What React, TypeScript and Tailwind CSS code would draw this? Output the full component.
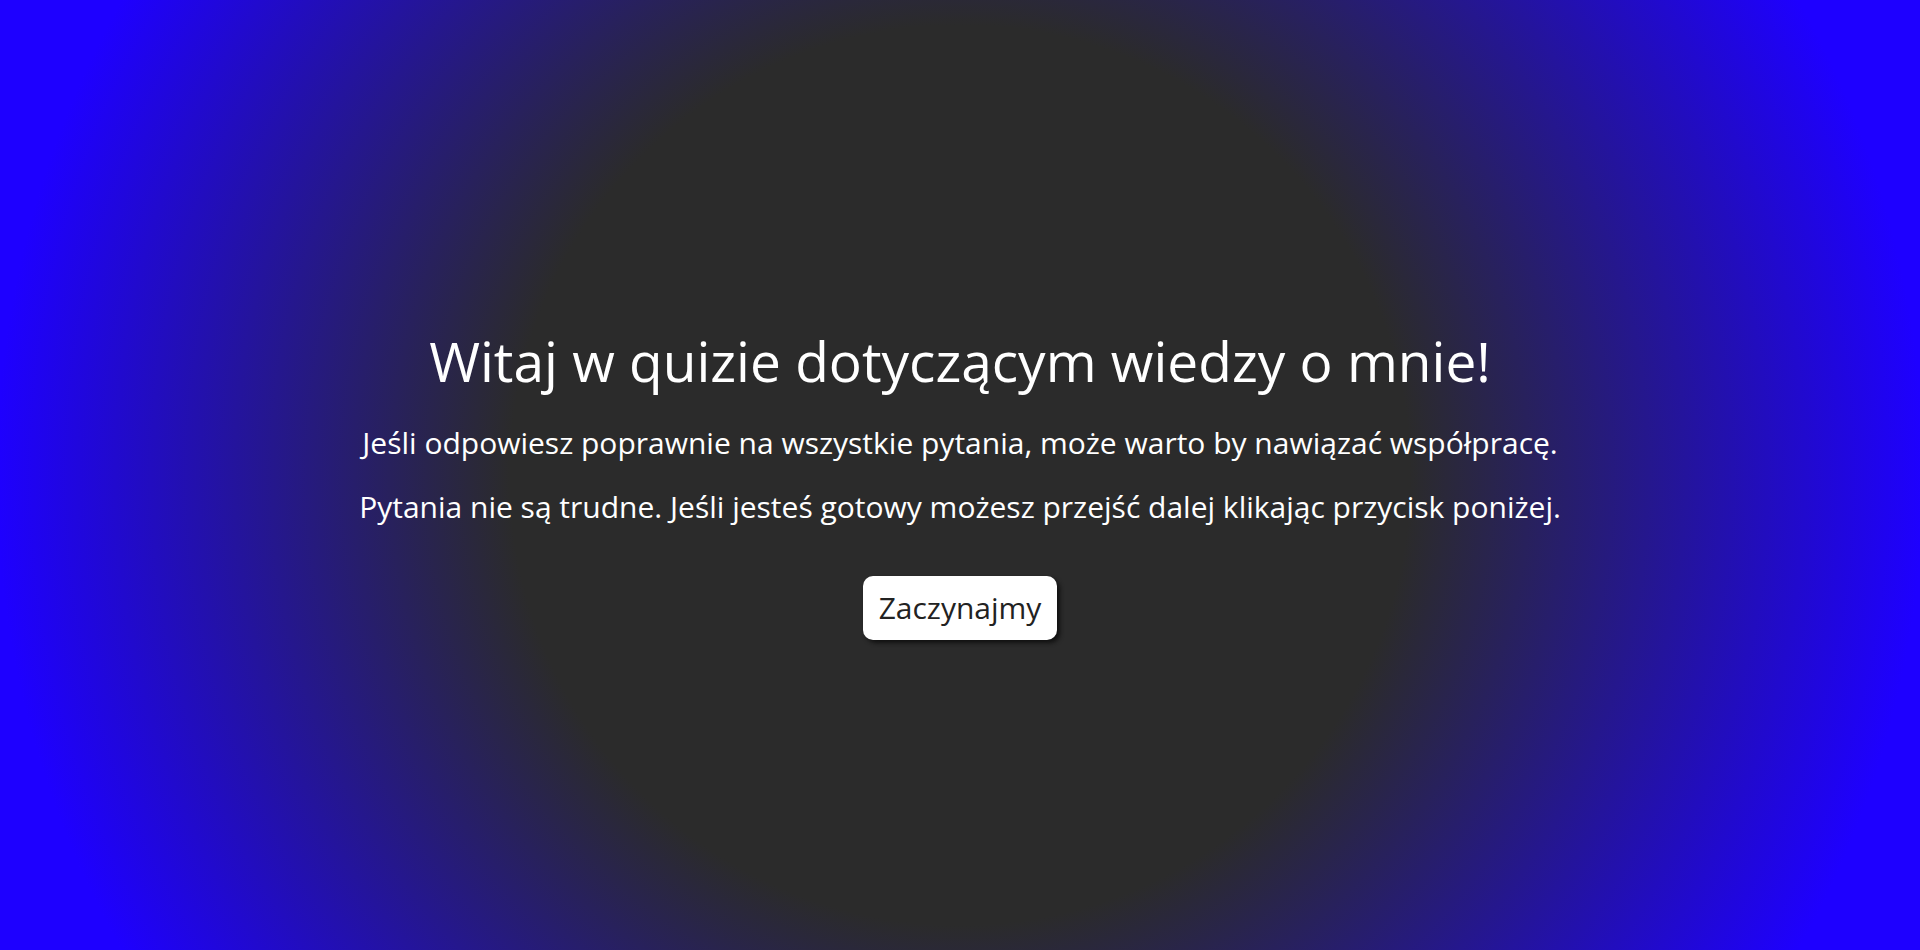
export default function App() {
  return (
    <div
      className="min-h-screen w-full flex flex-col items-center justify-center pt-[17px] text-white bg-[radial-gradient(circle,#2b2b2b_42%,#1e00ff_90%)]"
      style={{ fontFamily: '"Open Sans", "Noto Sans", sans-serif' }}
    >
      <h1 className="text-[55px] leading-[1.2] font-normal mb-[26px]">
        Witaj w quizie dotyczącym wiedzy o mnie!
      </h1>
      <p className="text-[30px] leading-normal mb-[19px]">
        Jeśli odpowiesz poprawnie na wszystkie pytania, może warto by nawiązać współpracę.
      </p>
      <p className="text-[30px] leading-normal mb-[47px]">
        Pytania nie są trudne. Jeśli jesteś gotowy możesz przejść dalej klikając przycisk poniżej.
      </p>
      <button className="bg-white text-[#222] text-[30px] leading-[1.4] px-4 py-[11px] rounded-[10px] shadow-[3px_3px_4px_#111]">
        Zaczynajmy
      </button>
    </div>
  );
}
